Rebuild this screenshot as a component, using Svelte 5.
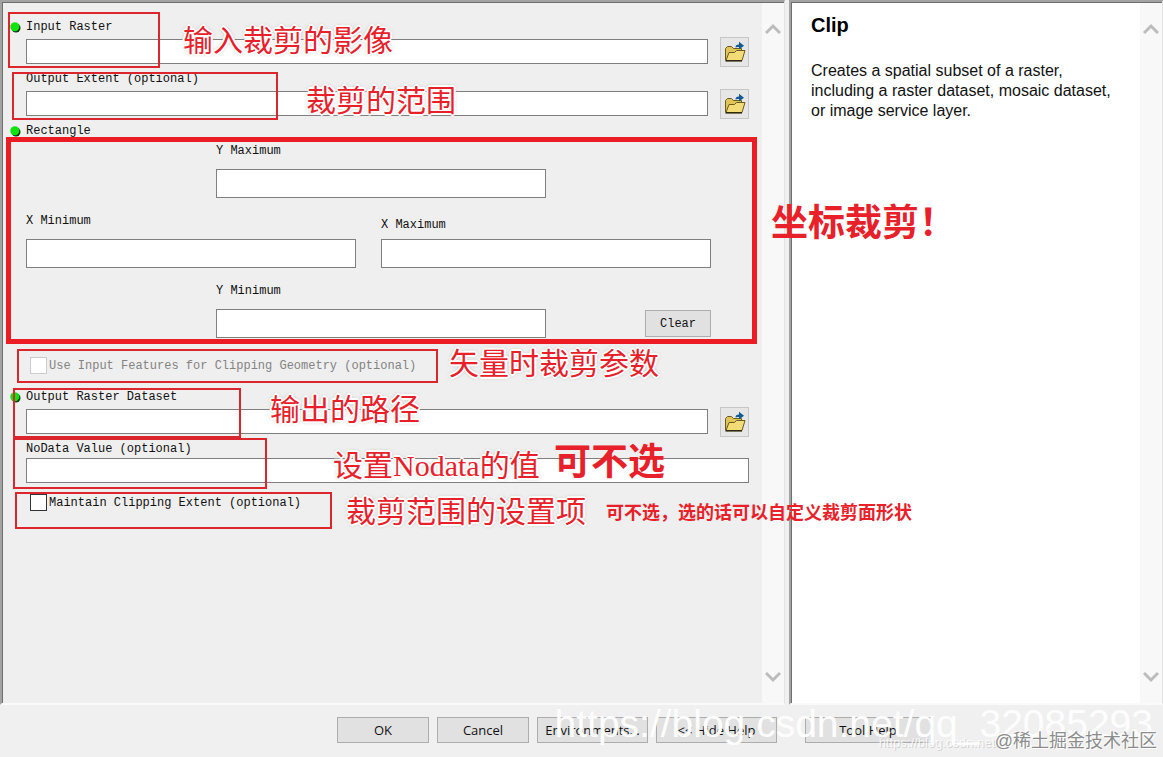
<script lang="ts">
  type Box = { x: number; y: number; w: number; h: number; thick?: boolean };
  type Note = { x: number; y: number; text: string; kind: 'song' | 'big' | 'small' };

  const boxes: Box[] = [
    { x: 8, y: 12, w: 152, h: 56 },
    { x: 12, y: 72, w: 266, h: 48 },
    { x: 6, y: 137, w: 751, h: 207, thick: true },
    { x: 17, y: 349, w: 421, h: 34 },
    { x: 13, y: 388, w: 228, h: 50 },
    { x: 13, y: 438, w: 254, h: 51 },
    { x: 15, y: 492, w: 317, h: 37 }
  ];

  const notes: Note[] = [
    { x: 183, y: 21, text: '输入裁剪的影像', kind: 'song' },
    { x: 306, y: 81, text: '裁剪的范围', kind: 'song' },
    { x: 449, y: 344, text: '矢量时裁剪参数', kind: 'song' },
    { x: 270, y: 390, text: '输出的路径', kind: 'song' },
    { x: 333, y: 446, text: '设置Nodata的值', kind: 'song' },
    { x: 346, y: 492, text: '裁剪范围的设置项', kind: 'song' },
    { x: 771, y: 200, text: '坐标裁剪！', kind: 'big' },
    { x: 554, y: 439, text: '可不选', kind: 'big' },
    { x: 606, y: 498, text: '可不选，选的话可以自定义裁剪面形状', kind: 'small' }
  ];

  let inputRaster = $state('');
  let extent = $state('');
  let outputRaster = $state('');
  let noData = $state('');
  let maintain = $state(false);
  let rect = $state({ top: '', left: '', right: '', bottom: '' });

  function clearRect() {
    rect = { top: '', left: '', right: '', bottom: '' };
  }
</script>

{#snippet dot()}
  <svg class="dot" viewBox="0 0 11 11" aria-hidden="true">
    <circle cx="6" cy="6" r="4.5" fill="#123d12" />
    <circle cx="4.8" cy="4.8" r="4.5" fill="#0be40f" />
  </svg>
{/snippet}

{#snippet browse(name: string)}
  <button class="browse" type="button" aria-label={`Browse for ${name}`}>
    <svg viewBox="0 0 22 22" aria-hidden="true">
      <path d="M1.5 19V7.5L3.5 5.5H7.5L9.5 7.5H17.5V10" fill="#dfc45a" stroke="#6b5a1c" />
      <path d="M2 19.5L5 11.5H10.5L12.5 9.5H21L18 19.5Z" fill="#f3dc78" stroke="#6b5a1c" />
      <path d="M1.5 19.8H18" stroke="#2f2809" stroke-width="1.6" />
      <path d="M11.5 6.5C11.5 4.5 12.5 3.5 15 3.5V0.8L20 4.8L15 8.6V6H13.5Z" fill="#125a94" />
    </svg>
  </button>
{/snippet}

{#snippet scrollbar(label: string)}
  <div class="scrollbar">
    <button type="button" aria-label={`Scroll ${label} up`}>
      <svg viewBox="0 0 16 12" aria-hidden="true"><path d="M1 10L8 3L15 10" /></svg>
    </button>
    <button type="button" aria-label={`Scroll ${label} down`}>
      <svg viewBox="0 0 16 12" aria-hidden="true"><path d="M1 2L8 9L15 2" /></svg>
    </button>
  </div>
{/snippet}

<div class="dialog">
  <main class="panels">
    <section class="panel params">
      <form class="form" onsubmit={(e) => e.preventDefault()}>
        <div class="field">
          <label for="in-raster">{@render dot()}Input Raster</label>
          <div class="line">
            <input id="in-raster" type="text" bind:value={inputRaster} />
            {@render browse('input raster')}
          </div>
        </div>

        <div class="field">
          <label for="extent">Output Extent (optional)</label>
          <div class="line">
            <input id="extent" type="text" bind:value={extent} />
            {@render browse('output extent')}
          </div>
        </div>

        <fieldset>
          <legend>{@render dot()}Rectangle</legend>
          <div class="rect">
            <div class="coord top">
              <label for="y-max">Y Maximum</label>
              <input id="y-max" type="text" bind:value={rect.top} />
            </div>
            <div class="coord left">
              <label for="x-min">X Minimum</label>
              <input id="x-min" type="text" bind:value={rect.left} />
            </div>
            <div class="coord right">
              <label for="x-max">X Maximum</label>
              <input id="x-max" type="text" bind:value={rect.right} />
            </div>
            <div class="coord bottom">
              <label for="y-min">Y Minimum</label>
              <input id="y-min" type="text" bind:value={rect.bottom} />
            </div>
            <button class="clear" type="button" onclick={clearRect}>Clear</button>
          </div>
        </fieldset>

        <label class="check geometry disabled">
          <input type="checkbox" disabled />Use Input Features for Clipping Geometry (optional)
        </label>

        <div class="field">
          <label for="out-raster">{@render dot()}Output Raster Dataset</label>
          <div class="line">
            <input id="out-raster" type="text" bind:value={outputRaster} />
            {@render browse('output raster dataset')}
          </div>
        </div>

        <div class="field tight">
          <label for="nodata">NoData Value (optional)</label>
          <input id="nodata" type="text" bind:value={noData} />
        </div>

        <label class="check">
          <input type="checkbox" bind:checked={maintain} />Maintain Clipping Extent (optional)
        </label>
      </form>
      {@render scrollbar('parameters')}
    </section>

    <aside class="panel help">
      <div class="help-text">
        <h1>Clip</h1>
        <p>Creates a spatial subset of a raster, including a raster dataset, mosaic dataset, or image service layer.</p>
      </div>
      {@render scrollbar('help')}
    </aside>
  </main>

  <footer class="actions">
    <button class="narrow" type="button">OK</button>
    <button class="narrow" type="button">Cancel</button>
    <button class="medium" type="button">Environments...</button>
    <button class="wide" type="button">&lt;&lt; Hide Help</button>
    <button class="wide tool" type="button">Tool Help</button>
  </footer>

  <!-- red tutorial marks on top of the dialog -->
  <div class="marks">
    {#each boxes as b}
      <div class="box" class:thick={b.thick} style={`left:${b.x}px;top:${b.y}px;width:${b.w}px;height:${b.h}px`}></div>
    {/each}
    {#each notes as n}
      <span class={`note ${n.kind}`} style={`left:${n.x}px;top:${n.y}px`}>{n.text}</span>
    {/each}
    <span class="mark-small">https://blog.csdn.net</span>
    <span class="mark-url">https://blog.csdn.net/qq_32085293</span>
    <span class="mark-site">@稀土掘金技术社区</span>
  </div>
</div>

<style>
  :global(body) {
    background: #f0f0f0;
  }
  .dialog, .dialog * {
    box-sizing: border-box;
  }
  .dialog {
    position: relative;
    display: flex;
    flex-direction: column;
    min-height: 100vh;
    overflow: hidden;
    color: #111;
    font-family: "Liberation Mono", monospace;
    font-size: 12px;
    line-height: 16px;
  }
  .panels {
    flex: 1;
    display: grid;
    grid-template-columns: minmax(0, 1fr) 374px;
    gap: 4px;
  }
  .panel {
    display: flex;
    padding: 1px 0 0 1px;
    border-style: solid;
    border-width: 2px 1px 2px 2px;
    border-color: #a3a3a3 #e3e3e3 #fafafa #a3a3a3;
    box-shadow: inset 1px 1px 0 #6e6e6e;
  }
  .params { background: #efefef; }
  .help {
    background: #fff;
    font-family: "Liberation Sans", sans-serif;
  }
  .form {
    flex: 1;
    min-width: 0;
    padding: 16px 13px 16px 23px;
  }
  .field {
    display: flex;
    flex-direction: column;
    gap: 4px;
    margin-bottom: 7px;
  }
  .field.tight { gap: 1px; margin-bottom: 11px; }
  .field label, legend {
    display: flex;
    align-items: center;
  }
  .dot {
    width: 11px;
    height: 11px;
    margin-left: -16px;
    margin-right: 5px;
  }
  .line {
    display: flex;
    align-items: center;
    gap: 12px;
    height: 25px;
  }
  input[type='text'] {
    display: block;
    width: 100%;
    min-width: 0;
    height: 25px;
    margin: 0;
    padding: 2px 4px;
    border: 1px solid #7f7f7f;
    background: #fff;
    font: inherit;
  }
  button {
    padding: 0;
    border: 1px solid #adadad;
    background: #e1e1e1;
    color: #111;
    font: inherit;
  }
  .browse {
    flex: none;
    display: grid;
    place-items: center;
    width: 29px;
    height: 30px;
    border-color: #c6c6c6;
    background: #e6e6e6;
  }
  .browse svg {
    width: 22px;
    height: 22px;
    fill: none;
  }
  fieldset {
    min-width: 0;
    margin: 0;
    padding: 0;
    border: 0;
  }
  legend {
    padding: 0;
    margin-bottom: 4px;
  }
  .rect {
    display: grid;
    grid-template-columns: 190fr 140fr 25fr 165fr 99fr 66fr 38fr;
    row-gap: 15px;
  }
  .coord {
    display: flex;
    flex-direction: column;
    justify-content: space-between;
    height: 55px;
  }
  .coord input[type='text'] { height: 29px; }
  .top { grid-area: 1 / 2 / 2 / 5; }
  .left { grid-area: 2 / 1 / 3 / 3; }
  .right { grid-area: 2 / 4 / 3 / 7; padding-top: 4px; }
  .bottom { grid-area: 3 / 2 / 4 / 5; }
  .clear {
    grid-area: 3 / 6 / 4 / 7;
    align-self: end;
    height: 27px;
    margin-bottom: 1px;
  }
  .check {
    display: flex;
    align-items: center;
    gap: 2px;
    height: 17px;
    padding-left: 4px;
  }
  .check input {
    appearance: none;
    width: 17px;
    height: 17px;
    margin: 0;
    border: 1px solid #333;
    background: #fff;
  }
  .check input:checked { background: #333; }
  .geometry { margin: 19px 0 15px; }
  .disabled { color: #838383; }
  .disabled input { border-color: #ccc; }
  .scrollbar {
    flex: none;
    display: flex;
    flex-direction: column;
    justify-content: space-between;
    align-items: center;
    width: 22px;
    padding: 20px 0;
    background: #f8f8f8;
  }
  .scrollbar button {
    display: flex;
    border: 0;
    background: none;
  }
  .scrollbar svg {
    width: 16px;
    height: 12px;
    fill: none;
    stroke: #bcbcbc;
    stroke-width: 3;
  }
  .help-text {
    flex: 1;
    padding: 10px 16px 0 19px;
  }
  h1 {
    margin: 0 0 24px;
    font-size: 20px;
    line-height: 24px;
    color: #000;
  }
  p {
    margin: 0;
    font-size: 16px;
    line-height: 20px;
  }
  .actions {
    display: flex;
    justify-content: flex-end;
    gap: 8px;
    padding: 12px 232px 14px 0;
    font-family: "Open Sans", sans-serif;
    font-size: 13px;
  }
  .actions button { height: 26px; }
  .narrow { width: 92px; }
  .medium { width: 111px; }
  .wide { width: 121px; }
  .tool { width: 126px; margin-left: 20px; }

  .marks {
    position: absolute;
    inset: 0;
    pointer-events: none;
    white-space: nowrap;
  }
  .box {
    position: absolute;
    border: 2px solid #dc262e;
  }
  .box.thick { border: 5px solid #ec1c24; }
  .note {
    position: absolute;
    color: #e8202a;
  }
  .song {
    font-family: "Liberation Serif", "Noto Sans CJK SC", serif;
    font-size: 30px;
    line-height: 40px;
    text-shadow:
      -2px 0 #fff, 2px 0 #fff, 0 -2px #fff, 0 2px #fff,
      -1px -1px #fff, 1px 1px #fff, 1px -1px #fff, -1px 1px #fff,
      0 0 4px #999;
  }
  .big {
    font-family: "Noto Sans CJK SC", sans-serif;
    font-size: 37px;
    font-weight: 700;
    line-height: 40px;
  }
  .small {
    font-family: "Noto Sans CJK SC", sans-serif;
    font-size: 18px;
    font-weight: 700;
    line-height: 26px;
  }
  .mark-url, .mark-small, .mark-site {
    position: absolute;
    font-family: "Liberation Sans", "Noto Sans CJK SC", sans-serif;
  }
  .mark-url {
    right: 10px;
    bottom: 11px;
    color: #fdfdfd;
    font-size: 39px;
    line-height: 44px;
  }
  .mark-small {
    right: 168px;
    bottom: 6px;
    color: rgba(255, 255, 255, 0.8);
    font-size: 13px;
    text-shadow: 1px 1px rgba(160, 160, 160, 0.4);
  }
  .mark-site {
    right: 6px;
    bottom: 4px;
    color: #8c8c8c;
    font-size: 18px;
    line-height: 24px;
    text-shadow: 1px 1px #fff, -1px -1px #fff;
  }
</style>
